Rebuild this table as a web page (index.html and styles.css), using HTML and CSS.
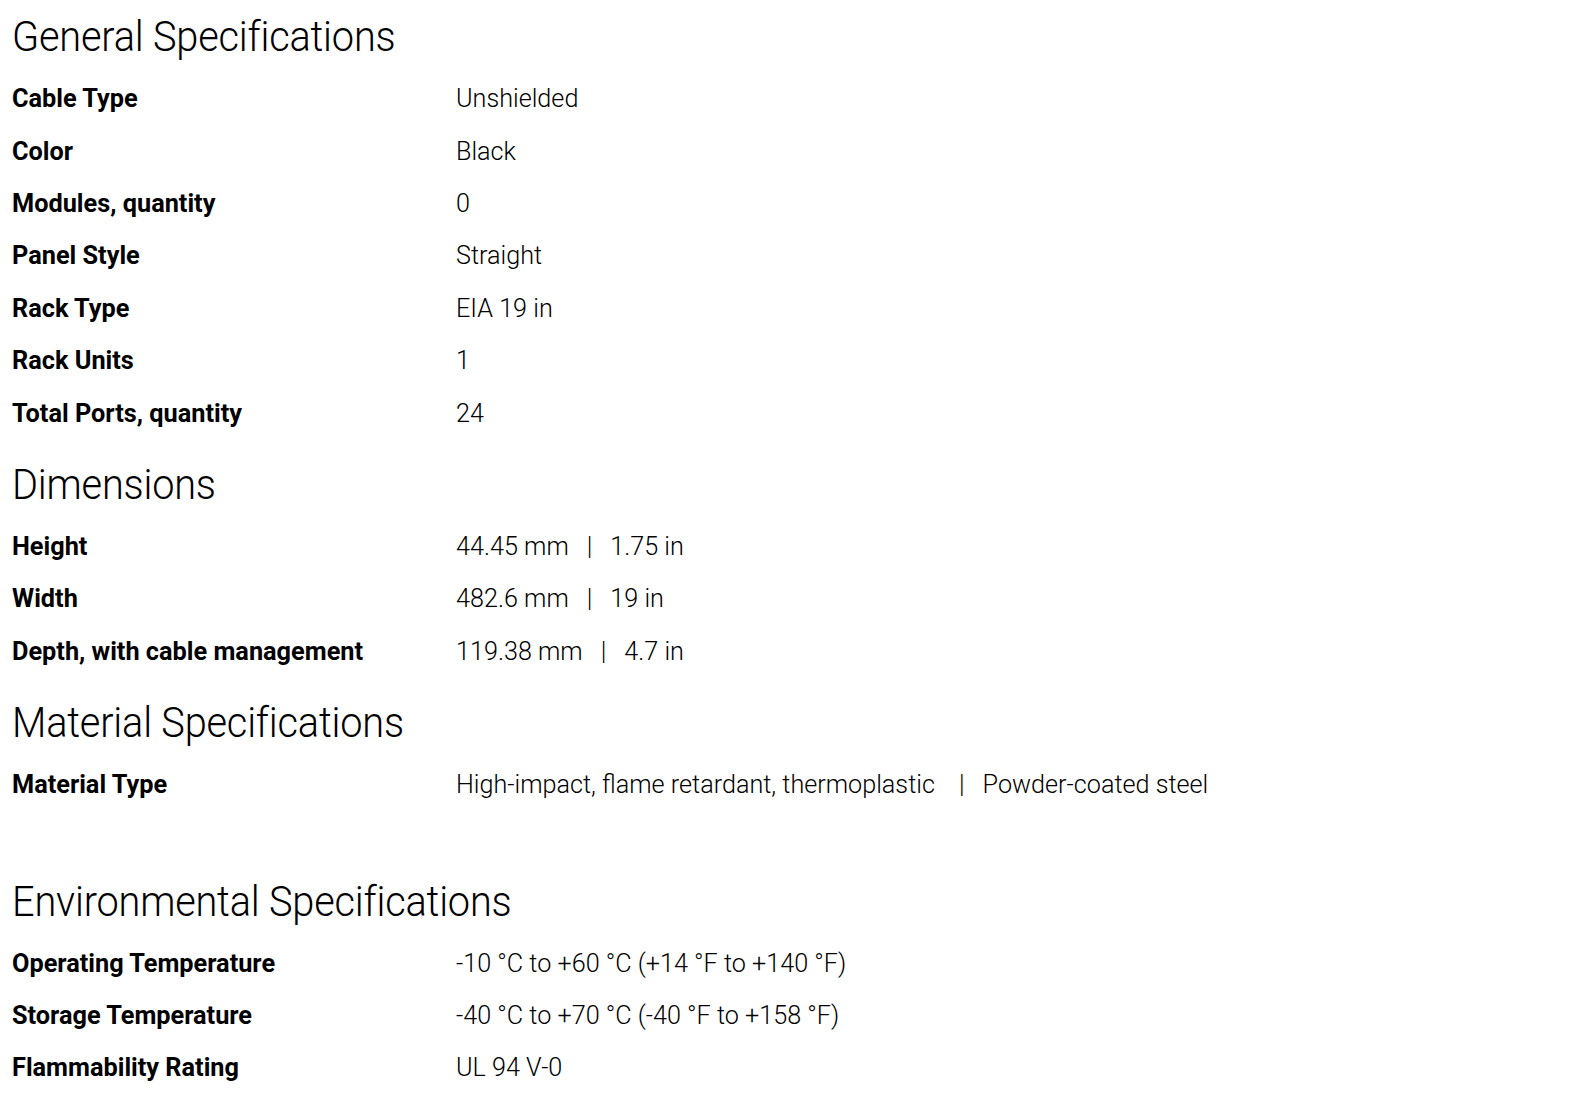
FILE: index.html
```html
<!DOCTYPE html>
<html lang="en">
<head>
<meta charset="utf-8">
<title>Specifications</title>
<link rel="stylesheet" href="styles.css">
</head>
<body>
<div class="specs">
  <section class="group">
    <h2 class="heading"><span class="heading-text">General Specifications</span></h2>
    <div class="row"><div class="label">Cable Type</div><div class="value">Unshielded</div></div>
    <div class="row"><div class="label">Color</div><div class="value">Black</div></div>
    <div class="row"><div class="label">Modules, quantity</div><div class="value">0</div></div>
    <div class="row"><div class="label">Panel Style</div><div class="value">Straight</div></div>
    <div class="row"><div class="label">Rack Type</div><div class="value">EIA 19 in</div></div>
    <div class="row"><div class="label">Rack Units</div><div class="value">1</div></div>
    <div class="row"><div class="label">Total Ports, quantity</div><div class="value">24</div></div>
  </section>
  <section class="group">
    <h2 class="heading"><span class="heading-text">Dimensions</span></h2>
    <div class="row"><div class="label">Height</div><div class="value">44.45 mm<span class="sep">|</span>1.75 in</div></div>
    <div class="row"><div class="label">Width</div><div class="value">482.6 mm<span class="sep">|</span>19 in</div></div>
    <div class="row"><div class="label">Depth, with cable management</div><div class="value">119.38 mm<span class="sep">|</span>4.7 in</div></div>
  </section>
  <section class="group">
    <h2 class="heading"><span class="heading-text">Material Specifications</span></h2>
    <div class="row"><div class="label">Material Type</div><div class="value">High-impact, flame retardant, thermoplastic <span class="sep">|</span>Powder-coated steel</div></div>
  </section>
  <section class="group group-spaced">
    <h2 class="heading"><span class="heading-text">Environmental Specifications</span></h2>
    <div class="row row-tight"><div class="label">Operating Temperature</div><div class="value">-10 °C to +60 °C (+14 °F to +140 °F)</div></div>
    <div class="row row-tight"><div class="label">Storage Temperature</div><div class="value">-40 °C to +70 °C (-40 °F to +158 °F)</div></div>
    <div class="row row-tight"><div class="label">Flammability Rating</div><div class="value">UL 94 V-0</div></div>
  </section>
</div>
</body>
</html>
```
FILE: styles.css
```css
html, body {
  margin: 0;
  padding: 0;
  background: #ffffff;
}

body {
  color: #000000;
  font-family: Roboto, "Liberation Sans", sans-serif;
}

.specs {
  padding: 12px 0 0 12px;
}

.heading {
  margin: 21px 0 10px 0;
  height: 50px;
  line-height: 50px;
  font-size: 42px;
  font-weight: 300;
  white-space: nowrap;
}

.group:first-child .heading {
  margin-top: 0;
}

.group-spaced .heading {
  margin-top: 67px;
}

.heading-text {
  display: inline-block;
  transform: scaleX(0.945);
  transform-origin: left center;
  letter-spacing: -0.2px;
}

.row {
  display: grid;
  grid-template-columns: 444px 1fr;
  align-items: center;
  height: 52.4px;
  padding-top: 1px;
  box-sizing: border-box;
  white-space: nowrap;
}

.row-tight {
  height: 51.8px;
}

.label {
  font-weight: 700;
  font-size: 25.3px;
}

.value {
  font-weight: 300;
  font-size: 25.2px;
}

.sep {
  margin: 0 18px;
}
```
